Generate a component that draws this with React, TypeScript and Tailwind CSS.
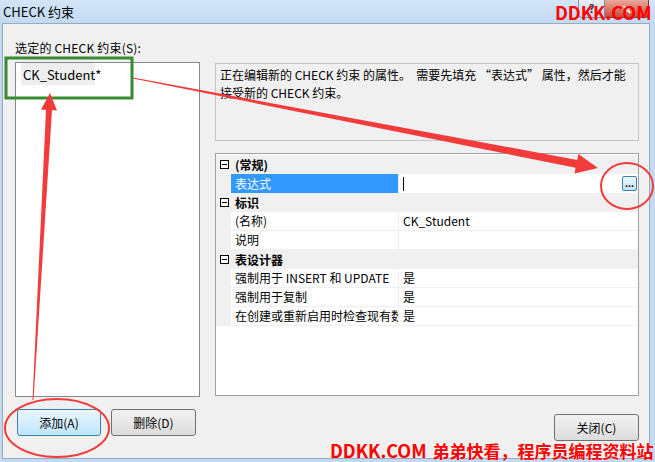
import React from "react";

const Minus = () => (
  <svg width="9" height="9" viewBox="0 0 9 9" className="block">
    <rect x="0.5" y="0.5" width="8" height="8" fill="#fff" stroke="#000" strokeWidth="1" />
    <line x1="2" y1="4.5" x2="7" y2="4.5" stroke="#000" strokeWidth="1" />
  </svg>
);

function Category({ label }: { label: string }) {
  return (
    <div className="flex h-[19px] items-center bg-[#f0f0f0]">
      <div className="flex w-[15px] justify-center pl-[1px]">
        <Minus />
      </div>
      <div className="pl-[4px] font-bold leading-none">{label}</div>
    </div>
  );
}

function Prop({
  name,
  value,
  selected,
  children,
}: {
  name: string;
  value?: string;
  selected?: boolean;
  children?: React.ReactNode;
}) {
  return (
    <div className="flex h-[19px]">
      <div className="w-[15px] bg-[#f0f0f0]" />
      <div
        className={
          selected
            ? "flex w-[167px] items-center overflow-hidden whitespace-nowrap bg-[#3399ff] pl-[4px] text-white"
            : "flex w-[167px] items-center overflow-hidden whitespace-nowrap border-b border-[#f0f0f0] pl-[4px]"
        }
      >
        {name}
      </div>
      <div className="w-px bg-[#f0f0f0]" />
      <div
        className={
          selected
            ? "flex flex-1 items-center pl-[4px]"
            : "flex flex-1 items-center border-b border-[#f0f0f0] pl-[4px]"
        }
      >
        {value}
        {children}
      </div>
    </div>
  );
}

export default function App() {
  return (
    <div className="relative h-[462px] w-[655px] overflow-hidden bg-[#c3d9f1] font-['Noto_Sans_CJK_SC','Noto_Sans',sans-serif] text-[12px] text-black">
      {/* title bar */}
      <div className="flex h-[23px] bg-gradient-to-b from-[#d4e5f8] to-[#c2d9f2]">
        <div className="flex items-center pl-[3px] text-[13px] leading-none">CHECK 约束</div>
        <div className="flex-1" />
        <div className="mr-[6px] flex h-[18px]">
          <div className="flex w-[27px] items-center justify-center rounded-bl-[4px] border border-t-0 border-[#7c8ea4] bg-gradient-to-b from-[#e6eef8] to-[#c7d5e6] text-[11px] font-bold text-[#333]">
            ?
          </div>
          <div className="flex w-[44px] items-center justify-center rounded-br-[4px] border border-l-0 border-t-0 border-[#7a3b3b] bg-gradient-to-b from-[#e9a99c] to-[#c74a3b] text-[12px] font-bold text-white">
            ✕
          </div>
        </div>
      </div>

      {/* client */}
      <div className="ml-[2px] mr-[5px] flex h-[436px] border border-[#97abc3] bg-[#f0f0f0]">
        {/* left column */}
        <div className="ml-[12px] flex w-[185px] flex-col">
          <div className="pt-[16px] leading-[16px] tracking-[0.2px]">选定的 CHECK 约束(S):</div>
          <div className="mt-[6px] h-[335px] border border-[#828790] bg-white">
            <div className="ml-[5px] flex h-[22px] w-[74px] items-center bg-[#eeeeee] pl-[2px] text-[13px] leading-none">
              CK_Student*
            </div>
          </div>
          <div className="mt-[12px] flex">
            <button className="ml-[2px] flex h-[27px] w-[84px] items-center justify-center rounded-[3px] border border-[#3c7fb1] bg-gradient-to-b from-[#eaf6fd] to-[#bee6fd] text-[12px]">
              添加(A)
            </button>
            <button className="ml-[10px] flex h-[27px] w-[85px] items-center justify-center rounded-[3px] border border-[#707070] bg-gradient-to-b from-[#f2f2f2] to-[#dcdcdc] text-[12px]">
              删除(D)
            </button>
          </div>
        </div>

        {/* right column */}
        <div className="ml-[15px] flex w-[424px] flex-col pt-[39px]">
          <div className="h-[78px] whitespace-pre border border-[#c4c4c4] bg-[#f0f0f0] px-[4px] pt-[2px] leading-[18px]">
            {"正在编辑新的 CHECK 约束 的属性。  需要先填充 “表达式” 属性，然后才能"}
            <br />
            {"接受新的 CHECK 约束。"}
          </div>
          <div className="mt-[12px] h-[243px] border border-[#a0a0a0] bg-white pt-px">
            <Category label="(常规)" />
            <Prop name="表达式" selected>
              <div className="h-[14px] w-px bg-black" />
              <div className="ml-auto mr-[1px] flex h-[15px] w-[15px] items-end justify-center rounded-[2px] border border-[#3c7fb1] bg-gradient-to-b from-[#eaf6fd] to-[#c4e5f6] pb-[2px] text-[9px] font-bold leading-none">
                ...
              </div>
            </Prop>
            <Category label="标识" />
            <Prop name="(名称)" value="CK_Student" />
            <Prop name="说明" />
            <Category label="表设计器" />
            <Prop name="强制用于 INSERT 和 UPDATE" value="是" />
            <Prop name="强制用于复制" value="是" />
            <Prop name="在创建或重新启用时检查现有数据" value="是" />
          </div>
          <button className="mt-[18px] flex h-[27px] w-[85px] items-center justify-center self-end rounded-[3px] border border-[#707070] bg-gradient-to-b from-[#f2f2f2] to-[#dcdcdc] text-[12px]">
            关闭(C)
          </button>
        </div>
      </div>

      {/* annotations */}
      <svg className="pointer-events-none absolute left-0 top-0" width="655" height="462" viewBox="0 0 655 462">
        <rect x="6" y="58" width="126" height="40" fill="none" stroke="#3a8a34" strokeWidth="3" />
        <polygon
          points="32.5,400 46,110 41,109.5 50,93 57,110.4 52,110.1 33.5,400"
          fill="#f23b3b"
        />
        <polygon
          points="133.1,77.5 577.2,159.9 578.3,154 598,168 574.5,173.6 575.6,167.8 132.9,78.5"
          fill="#f23b3b"
        />
        <ellipse cx="627" cy="186" rx="26" ry="23" fill="none" stroke="#f23b3b" strokeWidth="2" />
        <ellipse cx="57" cy="428" rx="52" ry="29" fill="none" stroke="#f23b3b" strokeWidth="2" />
      </svg>

      {/* watermarks */}
      <div className="absolute left-[555px] top-[2px] text-[18px] font-bold leading-[20px] text-[#ff0000]">
        DDKK.COM
      </div>
      <div className="absolute left-[330px] top-[440px] flex items-baseline whitespace-nowrap font-bold leading-[20px] text-[#ff0000]">
        <span className="text-[18px]">DDKK.COM</span>
        <span className="ml-[6px] text-[17px]">弟弟快看，程序员编程资料站</span>
      </div>
    </div>
  );
}
